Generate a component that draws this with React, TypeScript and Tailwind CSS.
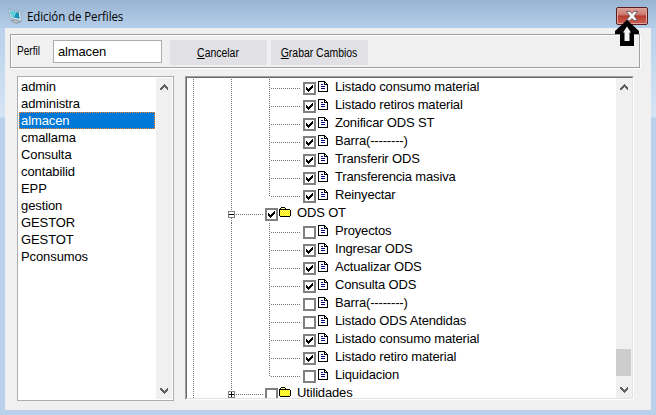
import React from 'react';

type Node = { label: string; checked: boolean; folder?: boolean; open?: boolean };

const profiles = ['admin', 'administra', 'almacen', 'cmallama', 'Consulta', 'contabilid', 'EPP', 'gestion', 'GESTOR', 'GESTOT', 'Pconsumos'];

const nodes: Node[] = [
  { label: 'Listado consumo material', checked: true },
  { label: 'Listado retiros material', checked: true },
  { label: 'Zonificar ODS ST', checked: true },
  { label: 'Barra(--------)', checked: true },
  { label: 'Transferir ODS', checked: true },
  { label: 'Transferencia masiva', checked: true },
  { label: 'Reinyectar', checked: true },
  { label: 'ODS OT', checked: true, folder: true, open: true },
  { label: 'Proyectos', checked: false },
  { label: 'Ingresar ODS', checked: true },
  { label: 'Actualizar ODS', checked: true },
  { label: 'Consulta ODS', checked: true },
  { label: 'Barra(--------)', checked: false },
  { label: 'Listado ODS Atendidas', checked: false },
  { label: 'Listado consumo material', checked: true },
  { label: 'Listado retiro material', checked: true },
  { label: 'Liquidacion', checked: false },
  { label: 'Utilidades', checked: false, folder: true },
];

function Chevron({ down = false }: { down?: boolean }) {
  return (
    <svg width="8" height="6" viewBox="0 0 8 6" className={down ? 'rotate-180' : ''} shapeRendering="crispEdges">
      <path d="M0 4 4 0 8 4V6H7L4 3 1 6H0Z" fill="#606060" />
    </svg>
  );
}

function DocIcon() {
  return (
    <svg width="10" height="11" viewBox="0 0 10 11" shapeRendering="crispEdges" className="shrink-0">
      <path d="M0 0h7v1h1v1h1v1h1v8H0z" fill="#000" />
      <path d="M1 1h5v3h3v6H1z" fill="#fff" />
      <path d="M7 2h1v1H7z" fill="#fff" />
      <path d="M3 3h2v1H3zM3 5h4v1H3zM3 7h4v1H3z" fill="#000080" />
    </svg>
  );
}

function FolderIcon() {
  return (
    <svg width="12" height="10" viewBox="0 0 12 10" shapeRendering="crispEdges" className="shrink-0">
      <path d="M0 2h1V1h1V0h4v1h1v1h4v1h1v6h-1v1H1V9H0z" fill="#000" />
      <path d="M2 1h4v1H2z" fill="#ffff80" />
      <path d="M1 3h10v6H1z" fill="#ffee00" />
      <path d="M1 3.5h10M2 4.500h9M1 5.500h10M2 6.500h9M1 7.500h10M2 8.500h9" stroke="#ffff60" strokeDasharray="1 1" />
    </svg>
  );
}

function Check({ on }: { on: boolean }) {
  return (
    <span className="flex size-[13px] shrink-0 items-center justify-center border-2 border-[#808080] bg-white">
      {on && (
        <svg width="7" height="7" viewBox="0 0 7 7" shapeRendering="crispEdges">
          <path d="M0 2h1v1h1v1h1V3h1V2h1V1h1V0h1v3H6v1H5v1H4v1H3v1H2V6H1V5H0z" fill="#000" />
        </svg>
      )}
    </span>
  );
}

const dotsX = 'h-px bg-[repeating-linear-gradient(90deg,#707070_0_1px,transparent_1px_2px)]';
const dotsY = 'w-px bg-[repeating-linear-gradient(180deg,#707070_0_1px,transparent_1px_2px)]';

function TreeRow({ node, index }: { node: Node; index: number }) {
  const last = index === 6 || index === 16;
  return (
    <div className="flex h-[18px] shrink-0">
      <div className={'ml-[6px] h-[18px] shrink-0 ' + dotsY} />
      {node.folder ? (
        <>
          <div className="ml-[34px] flex w-[7px] shrink-0 flex-col items-center">
            <div className={'h-[6px] ' + dotsY} />
            <svg width="7" height="7" viewBox="0 0 7 7" shapeRendering="crispEdges" className="shrink-0">
              <path d="M.5.5h6v6h-6z" fill="#fff" stroke="#808080" />
              <path d={node.open ? 'M1 3h5v1H1z' : 'M1 3h5v1H1zM3 1h1v5H3z'} fill="#000" />
            </svg>
            <div className={'h-[5px] ' + dotsY} />
          </div>
          <div className={'mt-[9px] ml-px w-[27px] shrink-0 ' + dotsX} />
          <div className="mt-[3px] ml-[2px] shrink-0"><Check on={node.checked} /></div>
          <div className="mt-[2px] ml-px shrink-0"><FolderIcon /></div>
        </>
      ) : (
        <>
          <div className={'ml-[37px] h-[18px] shrink-0 ' + dotsY} />
          <div className={'ml-[37px] shrink-0 ' + (last ? 'h-[10px] ' : 'h-[18px] ') + dotsY} />
          <div className={'mt-[9px] ml-px w-[30px] shrink-0 ' + dotsX} />
          <div className="mt-[3px] ml-[2px] shrink-0"><Check on={node.checked} /></div>
          <div className="mt-[2px] ml-[2px] shrink-0"><DocIcon /></div>
        </>
      )}
      <span className={'mt-[3px] h-[9px] text-[13px] leading-[9px] tracking-[-0.16px] whitespace-pre ' + (node.folder ? 'ml-[6px]' : 'ml-[7px]')}>{node.label}</span>
    </div>
  );
}

export default function App() {
  return (
    <div className="flex h-[415px] w-[656px] flex-col overflow-hidden bg-[#b9d1ea] bg-[linear-gradient(180deg,#99b4d1_0px,#b9d1ea_28px,#d5e4f4_117px,#b9d1ea_118px)] font-['Liberation_Sans',Arial,sans-serif] text-black">
      <header className="flex h-[28px] shrink-0 bg-linear-to-b from-[#99b4d1] to-[#b5cfeb] pl-[8px]">
        <svg width="15" height="16" viewBox="0 0 15 16" className="mt-[8px] shrink-0">
          <path d="M3 12.500 8 11.500 12.500 14 8 15.500Z" fill="#b9bec2" stroke="#76838d" strokeWidth=".6" />
          <path d="M.5 1.200 12.600 4 13.400 13 2.300 10Z" fill="#f4f8fb" stroke="#8598a8" strokeWidth=".7" />
          <path d="M1.800 2.500 11 4.600 11.700 11 3.400 8.900Z" fill="#1c93b4" />
          <path d="M1.800 2.500 8.500 4 6 9.500 3.400 8.900Z" fill="#68cfdc" />
        </svg>
        <h1 className="mt-[7px] ml-[4px] origin-left scale-x-[0.96] font-['Open_Sans','Noto_Sans',sans-serif] text-[12px] leading-[19px] tracking-[-0.1px]">Edición de Perfiles</h1>
        <div className="relative mt-[7px] mr-[8px] ml-auto flex h-[18px] w-[32px] justify-center rounded-[2px] border border-[#5b1d20] bg-[linear-gradient(180deg,#dda099_0,#c9766c_45%,#b43a2c_48%,#cc6255_100%)] pt-[3px] shadow-[inset_0_0_0_1px_#dfa49d]">
          <svg width="12" height="10" viewBox="0 0 12 10">
            <path d="M.5.500h3.500l2 2 2-2h3.500L8.300 5l3.200 4.500H8l-2-2-2 2H.5L3.700 5z" fill="#f8f8f8" stroke="#53545d" strokeWidth=".8" />
          </svg>
          <svg width="24" height="26" viewBox="0 0 24 26" className="absolute top-[12px] left-[-2px] z-10">
            <path d="M12 0 24 11V14H19V26H5V14H0V11Z" fill="#000" />
            <path d="M12 6.500 16 12.500H14.500V21H9.500V12.500H8Z" fill="#f4f4f4" />
          </svg>
        </div>
      </header>
      <main className="mx-[5px] flex h-[382px] shrink-0 flex-col bg-[#f0f0f0] px-[5px] pt-[6px]">
        <div className="flex h-[34px] w-[630px] shrink-0 border border-[#a0a0a0] pt-[5px] shadow-[inset_1px_1px_#fff,1px_1px_#fff]">
          <label className="mt-[3px] ml-[6px] w-[36px] text-[12px] leading-[17px]">
            <span className="inline-block origin-left scale-x-[0.84]">Perfil</span>
          </label>
          <div className="h-[23px] w-[109px] border border-[#abadb3] bg-white pl-[4px] text-[13px] leading-[22px] tracking-[-0.16px]">almacen</div>
          <button className="ml-[8px] h-[25px] w-[97px] bg-[#e1e0e5] text-[12px] leading-[26px]">
            <span className="inline-block scale-x-[0.87]"><u>C</u>ancelar</span>
          </button>
          <button className="ml-[4px] h-[25px] w-[97px] bg-[#e1e0e5] text-[12px] leading-[26px]">
            <span className="inline-block scale-x-[0.87] whitespace-nowrap"><u>G</u>rabar Cambios</span>
          </button>
        </div>
        <div className="mt-[8px] ml-[7px] flex">
          <div className="flex h-[325px] w-[157px] border border-[#abadb3] bg-white p-px">
            <ul className="mr-px w-[136px] text-[13px] leading-[18px] tracking-[-0.1px]">
              {profiles.map((p) => (
                <li key={p} className={'h-[17px] ' + (p === 'almacen' ? 'border border-dotted border-[#ff8728] bg-[#0078d7] pl-px leading-[16px] text-white' : 'pl-[2px]')}>{p}</li>
              ))}
            </ul>
            <div className="flex w-[16px] flex-col items-center justify-between bg-[#f0f0f0] pt-[6px] pb-[5px]">
              <Chevron />
              <Chevron down />
            </div>
          </div>
          <div className="ml-[11px] h-[324px] w-[449px] border border-t-[#a0a0a0] border-r-white border-b-white border-l-[#a0a0a0]">
            <div className="flex h-[322px] w-[447px] overflow-hidden border border-t-[#696969] border-r-[#e3e3e3] border-b-[#e3e3e3] border-l-[#696969] bg-white">
              <div className="flex h-[320px] w-[429px] flex-col overflow-hidden pt-px">
                {nodes.map((n, i) => (
                  <TreeRow key={i} node={n} index={i} />
                ))}
              </div>
              <div className="flex w-[16px] flex-col items-center bg-[#f0f0f0] pt-[6px]">
                <Chevron />
                <div className="mt-[259px] mb-[11px] h-[27px] w-[15px] shrink-0 self-start bg-[#cdcdcd]" />
                <Chevron down />
              </div>
            </div>
          </div>
        </div>
      </main>
    </div>
  );
}
